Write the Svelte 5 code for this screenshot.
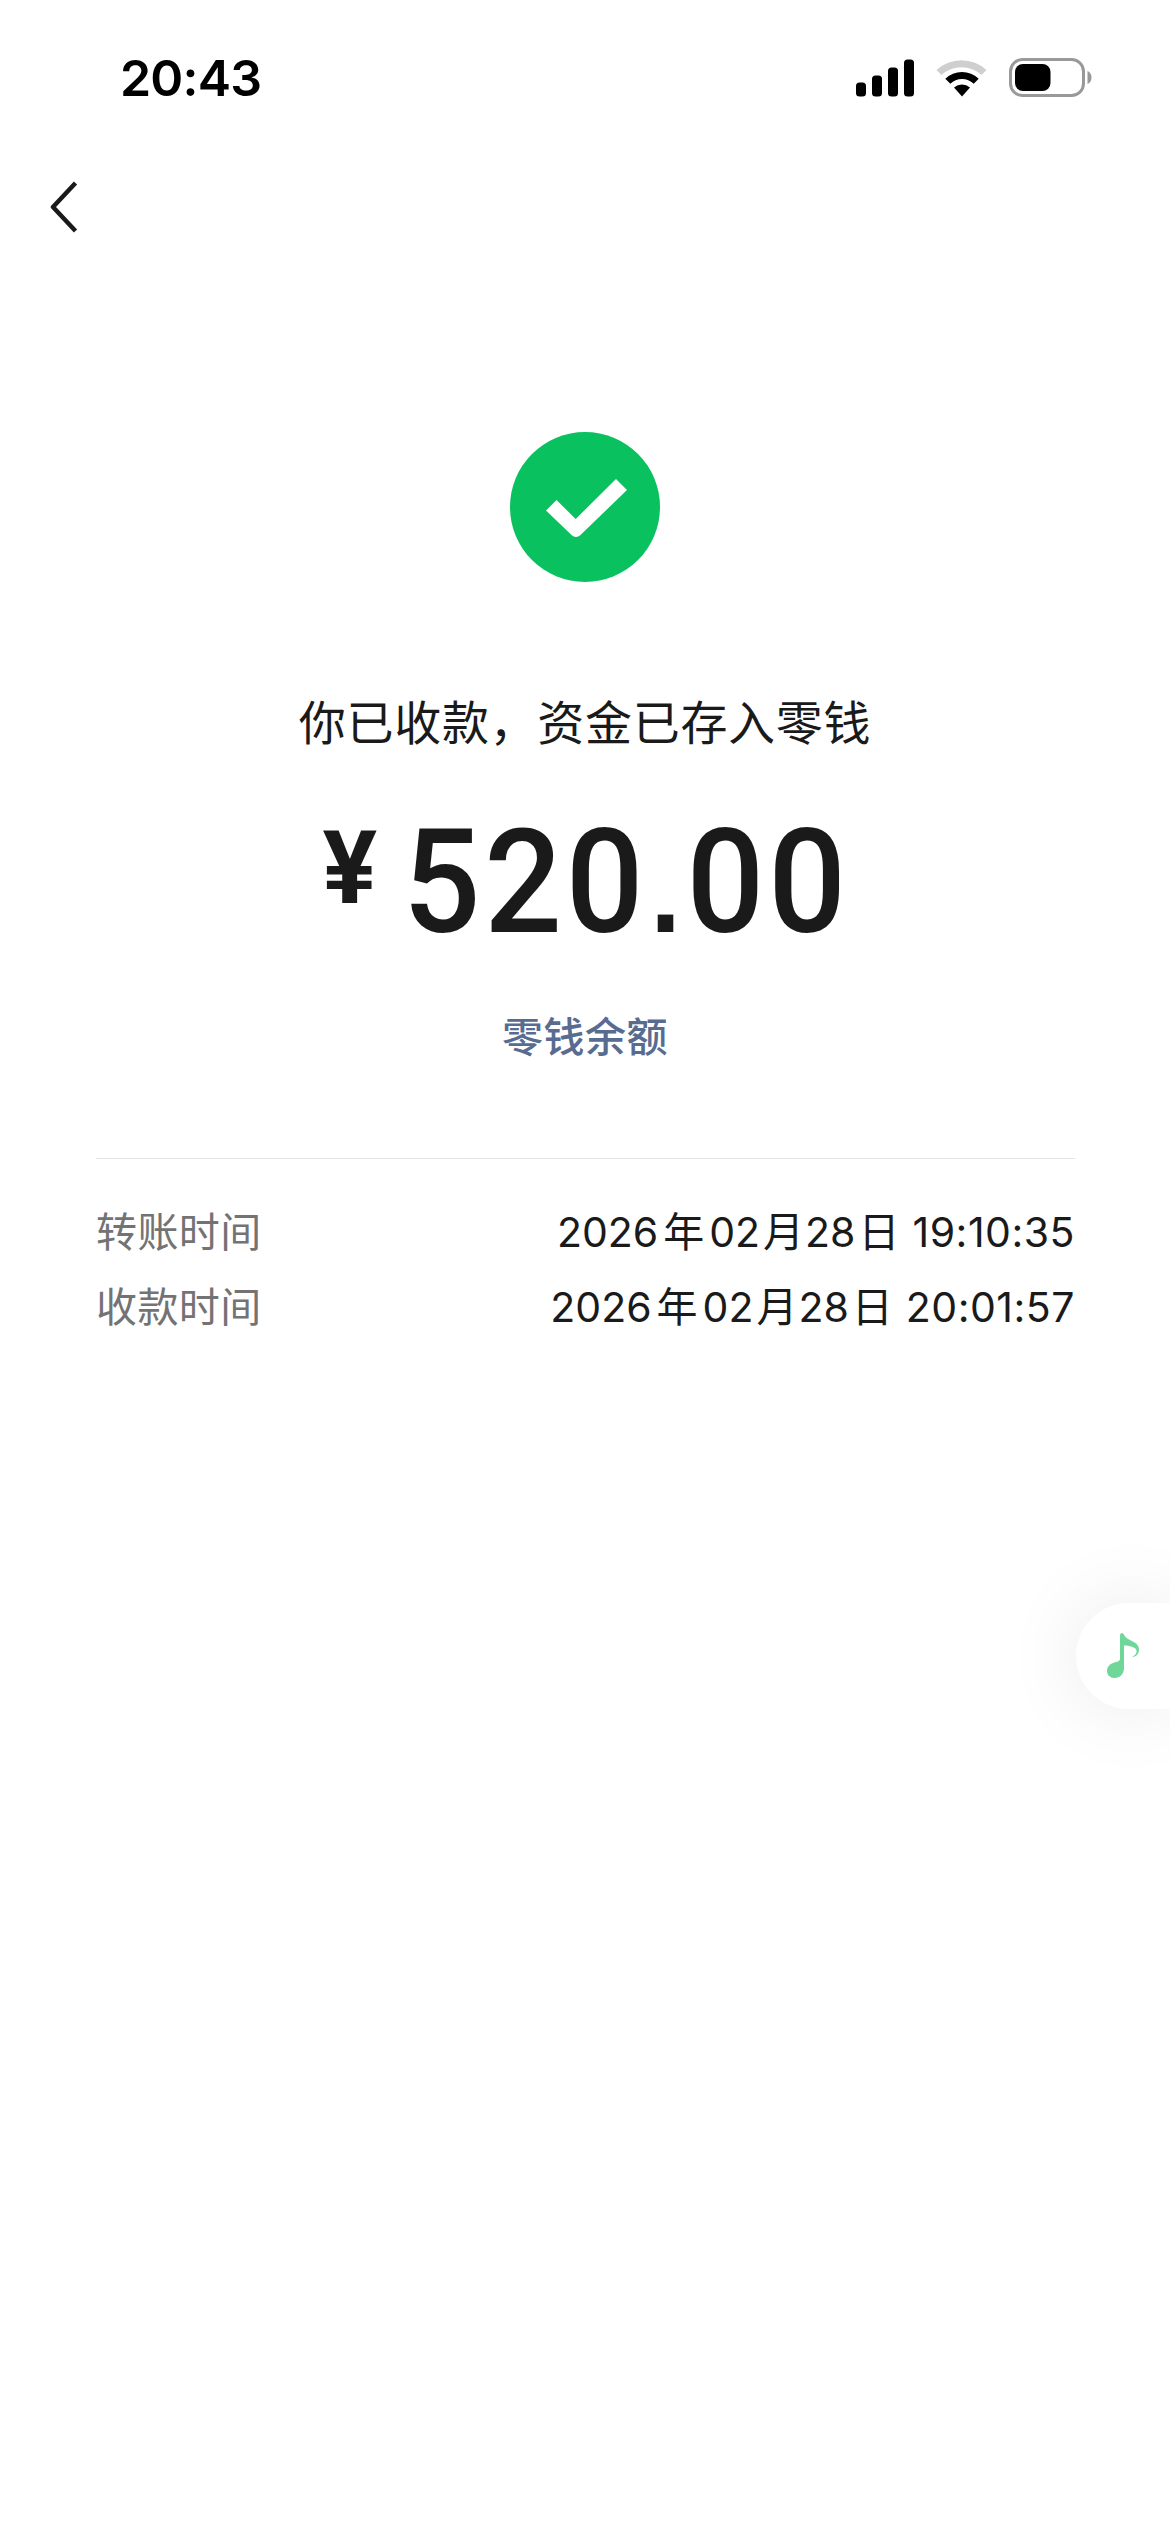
<script>
  let time = "20:43";
  let yuan = "520";
  let cents = "00";
  let bars = [14, 21, 29, 37];
  let rows = [
    { label: "转账时间", year: "2026", month: "02", day: "28", time: "19:10:35" },
    { label: "收款时间", year: "2026", month: "02", day: "28", time: "20:01:57" },
  ];
</script>

<div class="screen">
  <header class="status">
    <span class="clock">{time}</span>
    <div class="indicators">
      <svg class="signal" width="58" height="38" viewBox="0 0 58 38">
        {#each bars as h, i}
          <rect x={i * 16} y={37.5 - h} width="10" height={h} rx="3.5" />
        {/each}
      </svg>
      <svg class="wifi" width="52" height="38" viewBox="0 0 52 38">
        <path fill="#cfcfcf" d="M.5 11a37 37 0 0 1 50 0l-5 5a30 30 0 0 0-40 0z" />
        <path d="M9.3 19.8a24 24 0 0 1 33.4 0l-5 4.900a17 17 0 0 0-23.400 0z" />
        <path d="M18 28.600a12 12 0 0 1 16 0l-8 8.800z" />
      </svg>
      <svg class="battery" width="84" height="39" viewBox="0 0 84 39">
        <rect x="1.5" y="1.5" width="73" height="36" rx="12" fill="none" stroke="#999" stroke-width="3" />
        <rect x="6" y="6" width="35.5" height="27" rx="8" />
        <path fill="#999" d="M78.500 13q4 1.800 4 6.500t-4 6.500z" />
      </svg>
    </div>
  </header>

  <nav>
    <svg width="28" height="54" viewBox="0 0 28 54">
      <path d="M25.500 3 3 27l22.500 24" fill="none" stroke="#1a1a1a" stroke-width="4.500" stroke-linejoin="round" />
    </svg>
  </nav>

  <main>
    <svg class="done" width="150" height="150" viewBox="0 0 150 150">
      <circle cx="75" cy="75" r="75" fill="#0ac160" />
      <path fill="#fff" d="M36 78.500 46.500 68 65.700 87 106 47l11 11-46.500 45q-4.500 4-9 0z" />
    </svg>
    <p class="message">你已收款，资金已存入零钱</p>
    <div class="amount">
      <span class="yen">¥</span>
      <span class="digits">{yuan}<span class="dot">.</span>{cents}</span>
    </div>
    <a class="balance" href="#balance">零钱余额</a>

    <dl>
      {#each rows as row}
        <div class="row">
          <dt>{row.label}</dt>
          <dd>
            {row.year}<span class="year">年</span>{row.month}<span class="month">月</span>{row.day}<span class="day">日</span>
            <span class="hour">{row.time}</span>
          </dd>
        </div>
      {/each}
    </dl>
  </main>

  <div class="floating">
    <svg width="34" height="46" viewBox="0 0 34 46">
      <path
        fill="#6fd79a"
        d="M14 3Q14 0 16 0q1.500 0 2.500 2.500C21 8 33 8 33 16.500c0 4.500-3 7.500-7 7.500 3.500-2 5-4 4.500-6.500C30 14 23 12.500 18 12.500V35c0 6-4 10-9.500 10C4 45 1 42 1 38c0-5 4-8 9-9 3-.6 4-1.500 4-3.500z"
      />
    </svg>
  </div>
</div>

<style>
  :global(body) {
    background: #fff;
  }
  .screen {
    position: relative;
    width: 1170px;
    height: 2532px;
    overflow: hidden;
    color: #1a1a1a;
    font-family: Inter, "Noto Sans CJK SC", sans-serif;
  }
  .status {
    display: flex;
    align-items: center;
    justify-content: space-between;
    height: 155px;
    padding: 0 77px 0 120px;
    box-sizing: border-box;
    color: #000;
  }
  .clock {
    font-size: 50px;
    font-weight: 600;
    letter-spacing: -0.8px;
  }
  .indicators {
    display: flex;
    align-items: center;
    gap: 21.5px;
  }
  nav {
    height: 103px;
    padding-left: 50px;
    display: flex;
    align-items: center;
  }
  main {
    display: flex;
    flex-direction: column;
    align-items: center;
    padding: 174px 95px 0;
  }
  svg {
    display: block;
  }
  .message {
    margin: 106px 0 0;
    font-size: 47px;
    line-height: 70px;
    letter-spacing: 0.7px;
  }
  .amount {
    display: flex;
    align-items: flex-start;
    margin: 40px 0 0 14px;
    height: 170px;
    font-family: Roboto, sans-serif;
  }
  .yen {
    margin: 10px 14px 0 0;
    font-size: 102px;
    line-height: 120px;
    font-weight: 700;
  }
  .digits {
    font-size: 144px;
    line-height: 170px;
    font-weight: 500;
    letter-spacing: 4px;
    transform: scaleX(0.95);
  }
  .dot {
    margin: 0 2px 0 3px;
    font-family: "Liberation Sans", sans-serif;
    font-size: 116px;
    font-weight: 700;
    line-height: 1;
  }
  .balance {
    margin-top: 39px;
    font-size: 41px;
    line-height: 60px;
    font-weight: 500;
    letter-spacing: 0.5px;
    color: #586b90;
    text-decoration: none;
  }
  dl {
    align-self: stretch;
    margin: 91px 0 0 1px;
    padding-top: 36px;
    border-top: 1px solid #e3e3e3;
  }
  .row {
    display: flex;
    justify-content: space-between;
    height: 75px;
    line-height: 75px;
    font-size: 41px;
  }
  dt {
    color: #737373;
    letter-spacing: 0.4px;
  }
  dd {
    display: flex;
    margin: 0;
  }
  .year {
    margin: 0 5px;
  }
  .month {
    margin: 0 1px 0 3px;
  }
  .day {
    margin: 0 2px 0 3px;
  }
  .hour {
    margin-left: 11px;
    letter-spacing: 0.5px;
  }
  .floating {
    position: absolute;
    top: 1603px;
    right: 0;
    display: flex;
    align-items: center;
    width: 94px;
    height: 106px;
    padding-left: 30px;
    box-sizing: border-box;
    border-radius: 53px 0 0 53px;
    background: #fff;
    box-shadow: 0 0 80px rgba(0, 0, 0, 0.09);
  }
</style>
